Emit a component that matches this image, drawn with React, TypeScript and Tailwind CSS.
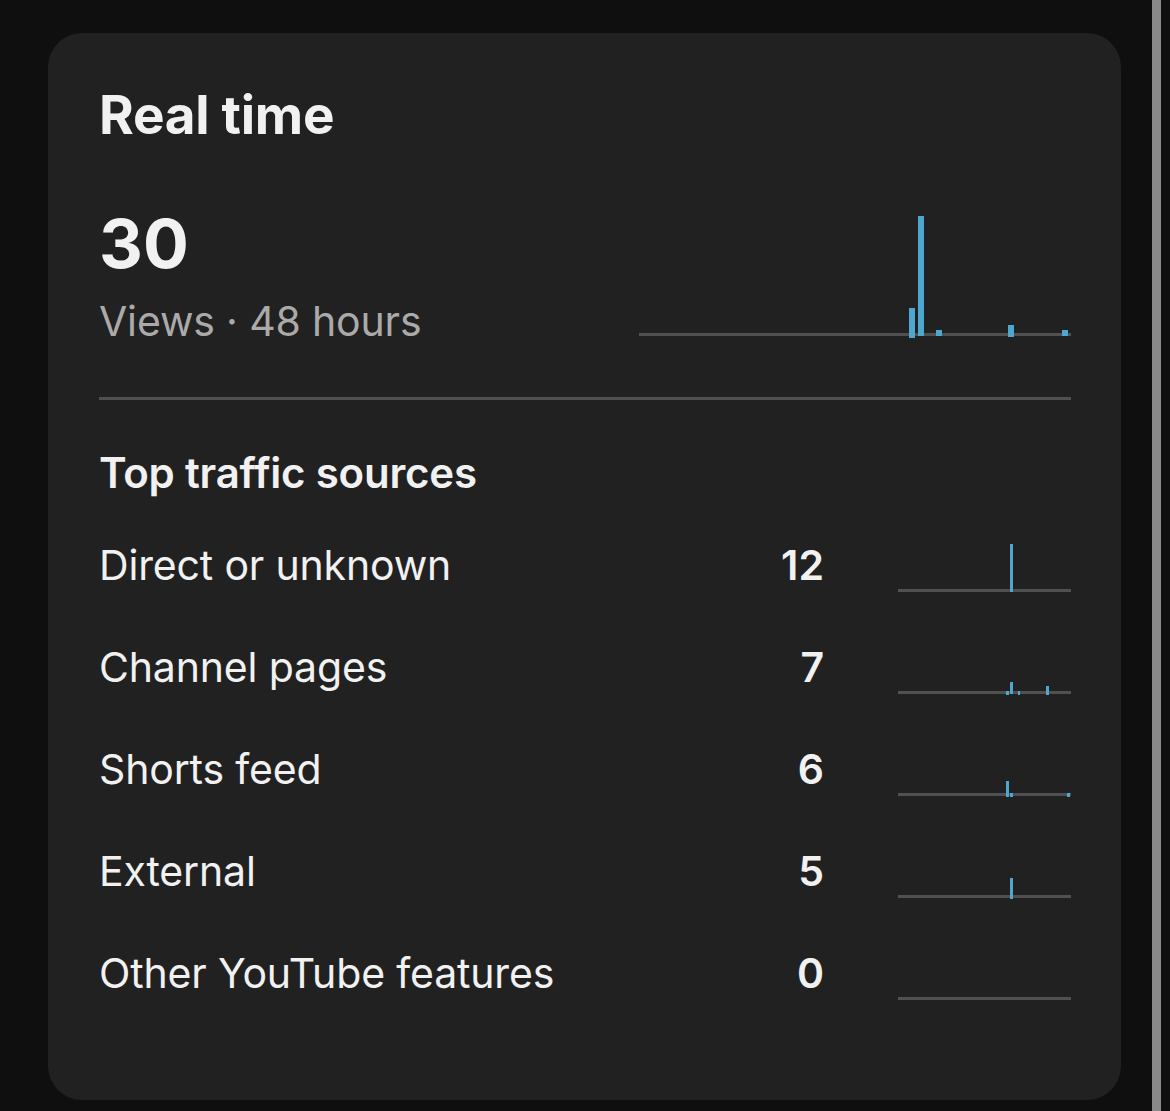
import React from 'react';

type Bar = { x: number; y: number; w: number; h: number };

const BAR_COLOR = '#4da7d0';
const AXIS_COLOR = '#505050';

// 48 hourly slots, 9px each
const viewBars: Bar[] = [
    { x: 270, y: 98, w: 6, h: 30 },
    { x: 279, y: 6, w: 6, h: 120 },
    { x: 297, y: 120, w: 6, h: 6 },
    { x: 369, y: 115, w: 6, h: 12 },
    { x: 423, y: 120, w: 6, h: 6 },
];

const sources: { label: string; count: number; bars: Bar[] }[] = [
    { label: 'Direct or unknown', count: 12, bars: [{ x: 112, y: 3, w: 3, h: 48 }] },
    {
        label: 'Channel pages',
        count: 7,
        bars: [
            { x: 108, y: 48, w: 3, h: 4 },
            { x: 112, y: 39, w: 3, h: 12 },
            { x: 120, y: 48, w: 2, h: 4 },
            { x: 148, y: 43, w: 3, h: 9 },
        ],
    },
    {
        label: 'Shorts feed',
        count: 6,
        bars: [
            { x: 108, y: 36, w: 3, h: 16 },
            { x: 112, y: 48, w: 3, h: 4 },
            { x: 169, y: 48, w: 3, h: 4 },
        ],
    },
    { label: 'External', count: 5, bars: [{ x: 112, y: 31, w: 3, h: 21 }] },
    { label: 'Other YouTube features', count: 0, bars: [] },
];

const Sparkline = ({ width, height, axisY, bars }: { width: number; height: number; axisY: number; bars: Bar[] }) => (
    <svg width={width} height={height} viewBox={`0 0 ${width} ${height}`} className="block shrink-0">
        <rect x={0} y={axisY} width={width} height={3} fill={AXIS_COLOR} />
        {bars.map((b, i) => (
            <rect key={i} x={b.x} y={b.y} width={b.w} height={b.h} fill={BAR_COLOR} />
        ))}
    </svg>
);

const App = () => {
    return (
        <div
            className="flex h-[1111px] w-[1170px] overflow-hidden bg-[#0f0f0f] text-[#f1f1f1]"
            style={{ fontFamily: 'Inter, "Noto Sans", sans-serif' }}
        >
            <div className="pl-[48px] pt-[33px]">
                <div className="flex h-[1067px] w-[1073px] flex-col rounded-[34px] bg-[#212121] pl-[51px] pr-[50px] pt-[56px]">
                    <h1 className="text-[53px] font-bold leading-none tracking-[-0.005em]">Real time</h1>

                    <div className="mt-[67px] flex items-end justify-between">
                        <div>
                            <div className="text-[68px] font-bold leading-none">30</div>
                            <div className="mt-[24px] text-[41px] leading-none tracking-[-0.004em] text-[#aaaaaa]">
                                Views · 48 hours
                            </div>
                        </div>
                        <div className="mb-[2px]">
                            <Sparkline width={432} height={130} axisY={123} bars={viewBars} />
                        </div>
                    </div>

                    <div className="mt-[55px] h-[3px] bg-[#505050]" />

                    <h2 className="mt-[52px] text-[42px] font-semibold leading-none tracking-[-0.005em]">
                        Top traffic sources
                    </h2>

                    <div className="mt-[22px] flex flex-col">
                        {sources.map((s) => (
                            <div key={s.label} className="flex h-[102px] items-center">
                                <div className="flex-1 pb-[3px] text-[41px] leading-none tracking-[-0.004em]">{s.label}</div>
                                <div className="pb-[3px] text-[41px] font-semibold leading-none">{s.count}</div>
                                <div className="ml-[74px] mt-[2px]">
                                    <Sparkline width={173} height={54} axisY={48} bars={s.bars} />
                                </div>
                            </div>
                        ))}
                    </div>
                </div>
            </div>
            <div className="ml-[31px] h-full w-[9px] bg-[#8a8a8a]" />
        </div>
    );
};

export default App;
